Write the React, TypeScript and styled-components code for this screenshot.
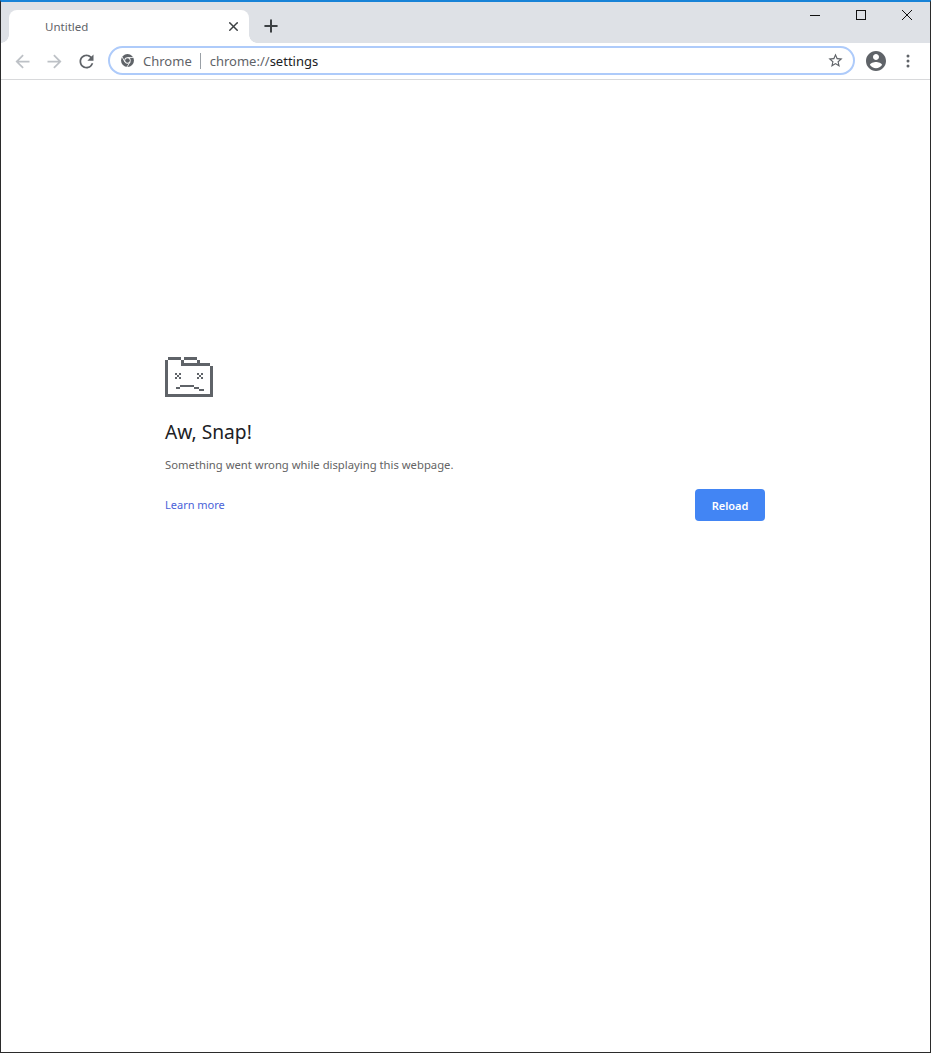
import React from 'react';
import styled, { createGlobalStyle } from 'styled-components';
import { X, Plus } from 'lucide-react';

const uiFont = `"Noto Sans", "Open Sans", "Liberation Sans", sans-serif`;

const GlobalStyle = createGlobalStyle`
  html, body {
    margin: 0;
    padding: 0;
    height: 100%;
    background: #ffffff;
  }

  body {
    font-family: ${uiFont};
  }
`;

const Window = styled.div`
  box-sizing: border-box;
  width: 931px;
  height: 1053px;
  display: flex;
  flex-direction: column;
  overflow: hidden;
  border: 1px solid #2b2b2b;
  border-top: 2px solid #1883d7;
  background: #ffffff;
`;

const TabStrip = styled.div`
  height: 41px;
  flex: none;
  display: flex;
  align-items: flex-end;
  background: #dee1e6;
  padding-left: 8px;
`;

const Tab = styled.div`
  position: relative;
  box-sizing: border-box;
  width: 240px;
  height: 33px;
  display: flex;
  align-items: center;
  justify-content: space-between;
  padding: 0 8px 0 36px;
  background: #ffffff;
  border-radius: 8px 8px 0 0;

  &::before,
  &::after {
    content: '';
    position: absolute;
    bottom: 0;
    width: 8px;
    height: 8px;
  }

  &::before {
    left: -8px;
    background: radial-gradient(circle at 0 0, transparent 7.5px, #ffffff 8px);
  }

  &::after {
    right: -8px;
    background: radial-gradient(circle at 100% 0, transparent 7.5px, #ffffff 8px);
  }
`;

const TabTitle = styled.span`
  font-size: 11.5px;
  color: #5f6368;
`;

const NewTab = styled.div`
  width: 28px;
  height: 28px;
  margin: 0 0 3px 8px;
  display: flex;
  align-items: center;
  justify-content: center;
  color: #3c4043;
`;

const Caption = styled.div`
  display: flex;
  align-self: flex-start;
  margin-left: auto;
  color: #111111;
`;

const CaptionButton = styled.div`
  width: 46px;
  height: 26px;
  display: flex;
  align-items: center;
  justify-content: center;
`;

const Toolbar = styled.div`
  box-sizing: border-box;
  height: 37px;
  flex: none;
  display: flex;
  align-items: center;
  padding: 0 6px 0 5px;
  background: #ffffff;
  border-bottom: 1px solid #d8d9db;
`;

const NavButton = styled.div<{ $dim?: boolean }>`
  width: 32px;
  height: 28px;
  display: flex;
  align-items: center;
  justify-content: center;
  color: ${(p) => (p.$dim ? '#bdc1c6' : '#5f6368')};
`;

const Omnibox = styled.div`
  box-sizing: border-box;
  flex: 1;
  height: 29px;
  margin: 0 0 1px 6px;
  display: flex;
  align-items: center;
  padding: 0 9px 0 11px;
  border: 2px solid #aecbfa;
  border-radius: 15px;
  background: #ffffff;
`;

const ChipLabel = styled.span`
  margin-left: 9px;
  font-size: 13px;
  color: #5f6368;
`;

const Divider = styled.span`
  width: 1px;
  height: 16px;
  margin: 0 9px 0 8px;
  background: #9aa0a6;
`;

const Url = styled.span`
  flex: 1;
  font-size: 13px;
  color: #5f6368;
`;

const UrlPath = styled.span`
  color: #202124;
`;

const ProfileButton = styled.div`
  width: 32px;
  height: 28px;
  margin-left: 5px;
  display: flex;
  align-items: center;
  justify-content: center;
  color: #5f6368;
`;

const MenuButton = styled(ProfileButton)`
  margin-left: 0;
`;

const Page = styled.main`
  flex: 1;
  box-sizing: border-box;
  padding: 277px 165px 0 164px;
  display: flex;
  flex-direction: column;
`;

const Heading = styled.h1`
  margin: 21px 0 0;
  font-size: 19.2px;
  line-height: 28px;
  font-weight: 400;
  color: #202124;
`;

const Message = styled.p`
  margin: 10px 0 0;
  font-size: 11.27px;
  line-height: 18px;
  color: #646464;
`;

const Actions = styled.div`
  margin-top: 15px;
  display: flex;
  align-items: center;
  justify-content: space-between;
`;

const LearnMore = styled.a`
  margin-bottom: 2px;
  font-size: 11px;
  color: #4a62d8;
  text-decoration: none;
`;

const ReloadButton = styled.button`
  width: 70px;
  height: 32px;
  padding: 0;
  border: none;
  border-radius: 4px;
  background: #4285f4;
  color: #ffffff;
  font-family: ${uiFont};
  font-size: 11px;
  font-weight: 600;
  cursor: pointer;
`;

const Icon = ({ d, size }: { d: string; size: number }) => (
  <svg width={size} height={size} viewBox="0 0 24 24" fill="currentColor">
    <path d={d} />
  </svg>
);

const backPath = 'M20 11H7.83l5.59-5.59L12 4l-8 8 8 8 1.41-1.41L7.83 13H20v-2z';
const forwardPath = 'M4 11h12.17l-5.59-5.59L12 4l8 8-8 8-1.41-1.41L16.17 13H4v-2z';
const reloadPath =
  'M17.65 6.35A7.958 7.958 0 0012 4c-4.42 0-7.99 3.58-7.99 8s3.57 8 7.99 8c3.73 0 6.84-2.55 7.73-6h-2.08A5.99 5.99 0 0112 18c-3.31 0-6-2.69-6-6s2.69-6 6-6c1.66 0 3.14.69 4.22 1.78L13 11h7V4l-2.35 2.35z';
const starPath =
  'M22 9.24l-7.19-.62L12 2 9.19 8.63 2 9.24l5.46 4.73L5.82 21 12 17.27 18.18 21l-1.63-7.03L22 9.24zM12 15.4l-3.76 2.27 1-4.28-3.32-2.88 4.38-.38L12 6.1l1.71 4.04 4.38.38-3.32 2.88 1 4.28L12 15.4z';
const accountPath =
  'M12 2C6.48 2 2 6.48 2 12s4.48 10 10 10 10-4.48 10-10S17.52 2 12 2zm0 3c1.66 0 3 1.34 3 3s-1.34 3-3 3-3-1.34-3-3 1.34-3 3-3zm0 14.2c-2.5 0-4.71-1.28-6-3.22.03-1.99 4-3.08 6-3.08 1.99 0 5.97 1.09 6 3.08-1.29 1.94-3.5 3.22-6 3.22z';

const ChromeLogo = () => (
  <svg width="13" height="13" viewBox="0 0 14 14">
    <circle cx="7" cy="7" r="7" fill="#5f6368" />
    <circle cx="7" cy="7" r="3.4" fill="#ffffff" />
    <circle cx="7" cy="7" r="2.5" fill="#5f6368" />
    <path d="M7 3.8 H13.5 M4.2 8.6 L1.2 3.2 M9.8 8.6 L6.4 14" stroke="#ffffff" strokeWidth="0.9" />
  </svg>
);

const MenuDots = () => (
  <svg width="4" height="14" viewBox="0 0 4 14">
    <circle cx="2" cy="2" r="1.5" fill="#5f6368" />
    <circle cx="2" cy="7" r="1.5" fill="#5f6368" />
    <circle cx="2" cy="12" r="1.5" fill="#5f6368" />
  </svg>
);

const MinimizeGlyph = () => (
  <svg width="10" height="10" viewBox="0 0 10 10" shapeRendering="crispEdges">
    <path d="M0 5h10v1H0z" fill="currentColor" />
  </svg>
);

const MaximizeGlyph = () => (
  <svg width="10" height="10" viewBox="0 0 10 10" shapeRendering="crispEdges" fill="none">
    <rect x="0.5" y="0.5" width="9" height="9" stroke="currentColor" />
  </svg>
);

const CloseGlyph = () => (
  <svg width="10" height="10" viewBox="0 0 10 10" fill="none">
    <path d="M0 0L10 10M10 0L0 10" stroke="currentColor" strokeWidth="1" />
  </svg>
);

// pixel-art sad tab, coordinates read off the reference
const SadTab = () => (
  <svg width="48" height="40" viewBox="0 0 48 40" fill="#5f6368" shapeRendering="crispEdges" style={{ display: 'block' }}>
    <path d="M0 3h3v37H0zM3 0h13v3H3zM16 3h3v6h-3zM19 0h13v3H19zM32 3h3v3h-3zM19 6h26v3H19zM45 9h3v31h-3zM3 37h42v3H3z" />
    <path d="M10 16h2v2h-2zM14 16h2v2h-2zM12 18h2v2h-2zM10 20h2v2h-2zM14 20h2v2h-2z" />
    <path d="M32 16h2v2h-2zM36 16h2v2h-2zM34 18h2v2h-2zM32 20h2v2h-2zM36 20h2v2h-2z" />
    <path d="M15 28h14v2H15zM11 30h4v2h-4zM29 30h5v2h-5zM34 32h5v2h-5z" />
  </svg>
);

export default function App() {
  return (
    <>
      <GlobalStyle />
      <Window>
        <TabStrip>
          <Tab>
            <TabTitle>Untitled</TabTitle>
            <X size={15} strokeWidth={2.4} color="#3c4043" />
          </Tab>
          <NewTab>
            <Plus size={20} strokeWidth={2.4} />
          </NewTab>
          <Caption>
            <CaptionButton>
              <MinimizeGlyph />
            </CaptionButton>
            <CaptionButton>
              <MaximizeGlyph />
            </CaptionButton>
            <CaptionButton>
              <CloseGlyph />
            </CaptionButton>
          </Caption>
        </TabStrip>
        <Toolbar>
          <NavButton $dim>
            <Icon d={backPath} size={21} />
          </NavButton>
          <NavButton $dim>
            <Icon d={forwardPath} size={21} />
          </NavButton>
          <NavButton>
            <Icon d={reloadPath} size={21} />
          </NavButton>
          <Omnibox>
            <ChromeLogo />
            <ChipLabel>Chrome</ChipLabel>
            <Divider />
            <Url>
              chrome://<UrlPath>settings</UrlPath>
            </Url>
            <svg width="17" height="17" viewBox="0 0 24 24" fill="#5f6368">
              <path d={starPath} />
            </svg>
          </Omnibox>
          <ProfileButton>
            <Icon d={accountPath} size={24} />
          </ProfileButton>
          <MenuButton>
            <MenuDots />
          </MenuButton>
        </Toolbar>
        <Page>
          <SadTab />
          <Heading>Aw, Snap!</Heading>
          <Message>Something went wrong while displaying this webpage.</Message>
          <Actions>
            <LearnMore href="#">Learn more</LearnMore>
            <ReloadButton type="button">Reload</ReloadButton>
          </Actions>
        </Page>
      </Window>
    </>
  );
}
